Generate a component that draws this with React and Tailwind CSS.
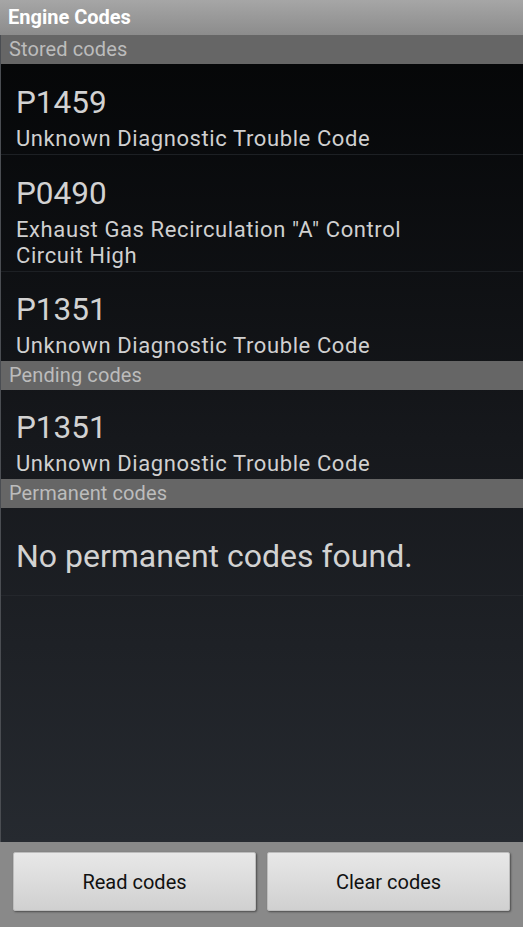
const stored = [
  { code: 'P1459', desc: 'Unknown Diagnostic Trouble Code' },
  { code: 'P0490', desc: 'Exhaust Gas Recirculation "A" Control Circuit High' },
  { code: 'P1351', desc: 'Unknown Diagnostic Trouble Code' },
]

const pending = [{ code: 'P1351', desc: 'Unknown Diagnostic Trouble Code' }]

function SectionHeader({ children }) {
  return (
    <div className="h-[29px] bg-[#666666] pl-[8px] text-[20px] leading-[29px] tracking-[0.1px] text-[#bcbcbc]">
      {children}
    </div>
  )
}

function CodeRow({ code, desc, last }) {
  return (
    <div className={'pl-[15px] pb-[2px] ' + (last ? 'pt-[20px]' : 'pt-[21px] border-b border-[#1d2024]')}>
      <div className="h-[36px] text-[31.5px] leading-[36px] text-[#d2d2d2]">{code}</div>
      <div className="mt-[5px] w-[430px] text-[22px] leading-[26px] tracking-[0.6px] text-[#d0d0d0]">{desc}</div>
    </div>
  )
}

export default function App() {
  return (
    <div
      className="flex h-[927px] w-[523px] flex-col overflow-hidden"
      style={{ fontFamily: 'Roboto, "Noto Sans", sans-serif' }}
    >
      {/* title bar */}
      <div className="h-[35px] shrink-0 bg-gradient-to-b from-[#a6a6a6] to-[#8c8c8c] pl-[8px] text-[20px] font-bold leading-[35px] text-white">
        Engine Codes
      </div>

      <div className="flex flex-1 flex-col border-l border-[#4a4d52] bg-gradient-to-b from-[#050607] via-[#16181c] to-[#262a30]">
        <SectionHeader>Stored codes</SectionHeader>
        {stored.map((c, i) => (
          <CodeRow key={i} code={c.code} desc={c.desc} last={i === stored.length - 1} />
        ))}
        <SectionHeader>Pending codes</SectionHeader>
        {pending.map((c, i) => (
          <CodeRow key={i} code={c.code} desc={c.desc} last />
        ))}
        <SectionHeader>Permanent codes</SectionHeader>
        <div className="h-[88px] border-b border-[#24272c] pl-[15px] pt-[29px] text-[32px] leading-[38px] text-[#d2d2d2]">
          No permanent codes found.
        </div>
      </div>

      {/* bottom buttons */}
      <div className="flex h-[85px] shrink-0 gap-[11px] bg-[#898989] px-[13px] pt-[10px] pb-[16px]">
        <button className="flex-1 rounded-[2px] border border-[#bdbdbd] bg-gradient-to-b from-[#e8e8e8] to-[#d0d0d0] text-[20px] text-[#111111] shadow-[1px_1px_2px_rgba(0,0,0,0.45)]">
          Read codes
        </button>
        <button className="flex-1 rounded-[2px] border border-[#bdbdbd] bg-gradient-to-b from-[#e8e8e8] to-[#d0d0d0] text-[20px] text-[#111111] shadow-[1px_1px_2px_rgba(0,0,0,0.45)]">
          Clear codes
        </button>
      </div>
    </div>
  )
}
